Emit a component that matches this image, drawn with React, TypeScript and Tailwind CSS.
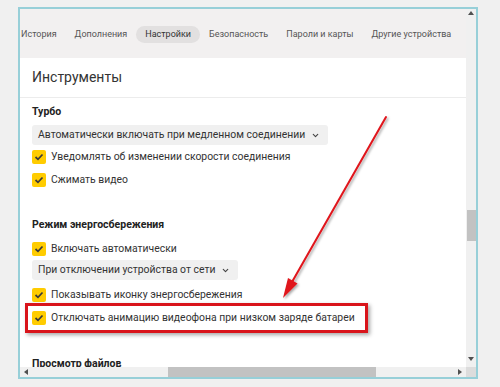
import { ChevronDown } from "lucide-react";

const font = { fontFamily: 'Roboto, "Noto Sans", sans-serif' };

const Check = ({ label }: { label: string }) => (
  <div className="flex h-[23px] items-center gap-[5px]">
    <div className="flex h-[14px] w-[14px] items-center justify-center rounded-[2px] bg-[#ffcc00]">
      <svg width="10" height="8" viewBox="0 0 10 8">
        <path d="M1.5 4 L4 6.3 L8.5 1.5" fill="none" stroke="#3a3a3a" strokeWidth="1.7" />
      </svg>
    </div>
    <span className="whitespace-nowrap text-[10.4px] text-[#333]">{label}</span>
  </div>
);

const Select = ({ label }: { label: string }) => (
  <div className="flex h-[20px] items-center gap-[6px] rounded-[3px] bg-[#f0f0f0] pl-[6px] pr-[8px]">
    <span className="whitespace-nowrap text-[10.4px] text-[#333]">{label}</span>
    <ChevronDown size={9} strokeWidth={3} className="text-[#444]" />
  </div>
);

export default function App() {
  const tabs = ["История", "Дополнения", "Настройки", "Безопасность", "Пароли и карты", "Другие устройства"];

  return (
    <div className="relative h-[387px] w-[500px] overflow-hidden bg-[#f0f0f0]" style={font}>
      <div className="ml-[18px] mt-[7px] flex h-[372px] w-[460px] flex-col border-2 border-[#97cfd8]">
        <div className="flex h-[358px]">
          {/* page */}
          <div className="flex w-[446px] flex-col overflow-hidden bg-[#f2f0f0]">
            <div className="ml-[-8px] flex h-[49px] shrink-0 items-start pt-[17px] text-[9px] text-[#555]">
              {tabs.map((t) => (
                <span
                  key={t}
                  className={
                    t === "Настройки"
                      ? "flex h-[17px] items-center whitespace-nowrap rounded-full bg-[#e2e0e0] px-[9px] text-[#333]"
                      : "flex h-[17px] items-center whitespace-nowrap px-[9px]"
                  }
                >
                  {t}
                </span>
              ))}
            </div>

            <div className="flex-1 overflow-hidden bg-white">
              <div className="flex h-[40px] items-center border-b border-[#ececec] pl-[12px] text-[14px] text-[#333]">
                Инструменты
              </div>
              <div className="flex flex-col items-start pl-[12px]">
                <div className="mt-[5px] flex h-[18px] items-center text-[10.5px] font-bold text-[#222]">Турбо</div>
                <div className="mt-[4px]">
                  <Select label="Автоматически включать при медленном соединении" />
                </div>
                <Check label="Уведомлять об изменении скорости соединения" />
                <Check label="Сжимать видео" />
                <div className="mt-[25px] flex h-[18px] items-center text-[10.5px] font-bold text-[#222]">
                  Режим энергосбережения
                </div>
                <div className="mt-[3px]">
                  <Check label="Включать автоматически" />
                </div>
                <Select label="При отключении устройства от сети" />
                <div className="mt-[3px]">
                  <Check label="Показывать иконку энергосбережения" />
                </div>
                <Check label="Отключать анимацию видеофона при низком заряде батареи" />
                <div className="mt-[26px] flex h-[18px] items-center text-[10.5px] font-bold text-[#222]">
                  Просмотр файлов
                </div>
              </div>
            </div>
          </div>

          {/* vertical scrollbar */}
          <div className="flex w-[10px] flex-col items-center bg-[#f0f0f0]">
            <svg width="6" height="4" viewBox="0 0 6 4" className="mt-[2px]">
              <path d="M0 4 L3 0 L6 4 Z" fill="#505050" />
            </svg>
            <div className="mt-[195px] h-[31px] w-[9px] bg-[#c2c2c2]" />
            <div className="flex-1" />
            <svg width="6" height="4" viewBox="0 0 6 4" className="mb-[6px]">
              <path d="M0 0 L6 0 L3 4 Z" fill="#505050" />
            </svg>
          </div>
        </div>

        {/* horizontal scrollbar */}
        <div className="flex h-[10px] items-center bg-[#f0f0f0]">
          <svg width="4" height="6" viewBox="0 0 4 6" className="ml-[4px]">
            <path d="M4 0 L4 6 L0 3 Z" fill="#505050" />
          </svg>
          <div className="ml-[140px] h-[10px] w-[208px] bg-[#c2c2c2]" />
          <div className="flex-1" />
          <svg width="4" height="6" viewBox="0 0 4 6" className="mr-[4px]">
            <path d="M0 0 L4 3 L0 6 Z" fill="#505050" />
          </svg>
          <div className="h-[10px] w-[10px] bg-[#dcdcdc]" />
        </div>
      </div>

      {/* annotation box */}
      <div className="pointer-events-none absolute left-[25px] top-[303px] h-[30px] w-[343px] border-[3px] border-[#d9141b] shadow-[2px_2px_4px_rgba(0,0,0,0.35)]" />

      {/* annotation arrow */}
      <svg className="pointer-events-none absolute left-0 top-0" width="500" height="387" viewBox="0 0 500 387">
        <defs>
          <filter id="sh" x="-20%" y="-20%" width="140%" height="140%">
            <feDropShadow dx="1.5" dy="1.5" stdDeviation="1.2" floodColor="#000" floodOpacity="0.35" />
          </filter>
        </defs>
        <g filter="url(#sh)">
          <line x1="386" y1="117" x2="292" y2="282" stroke="#e0141b" strokeWidth="2" strokeLinecap="round" />
          <path d="M283 298 L297.5 283.5 L288 278 Z" fill="#e0141b" />
        </g>
      </svg>
    </div>
  );
}
